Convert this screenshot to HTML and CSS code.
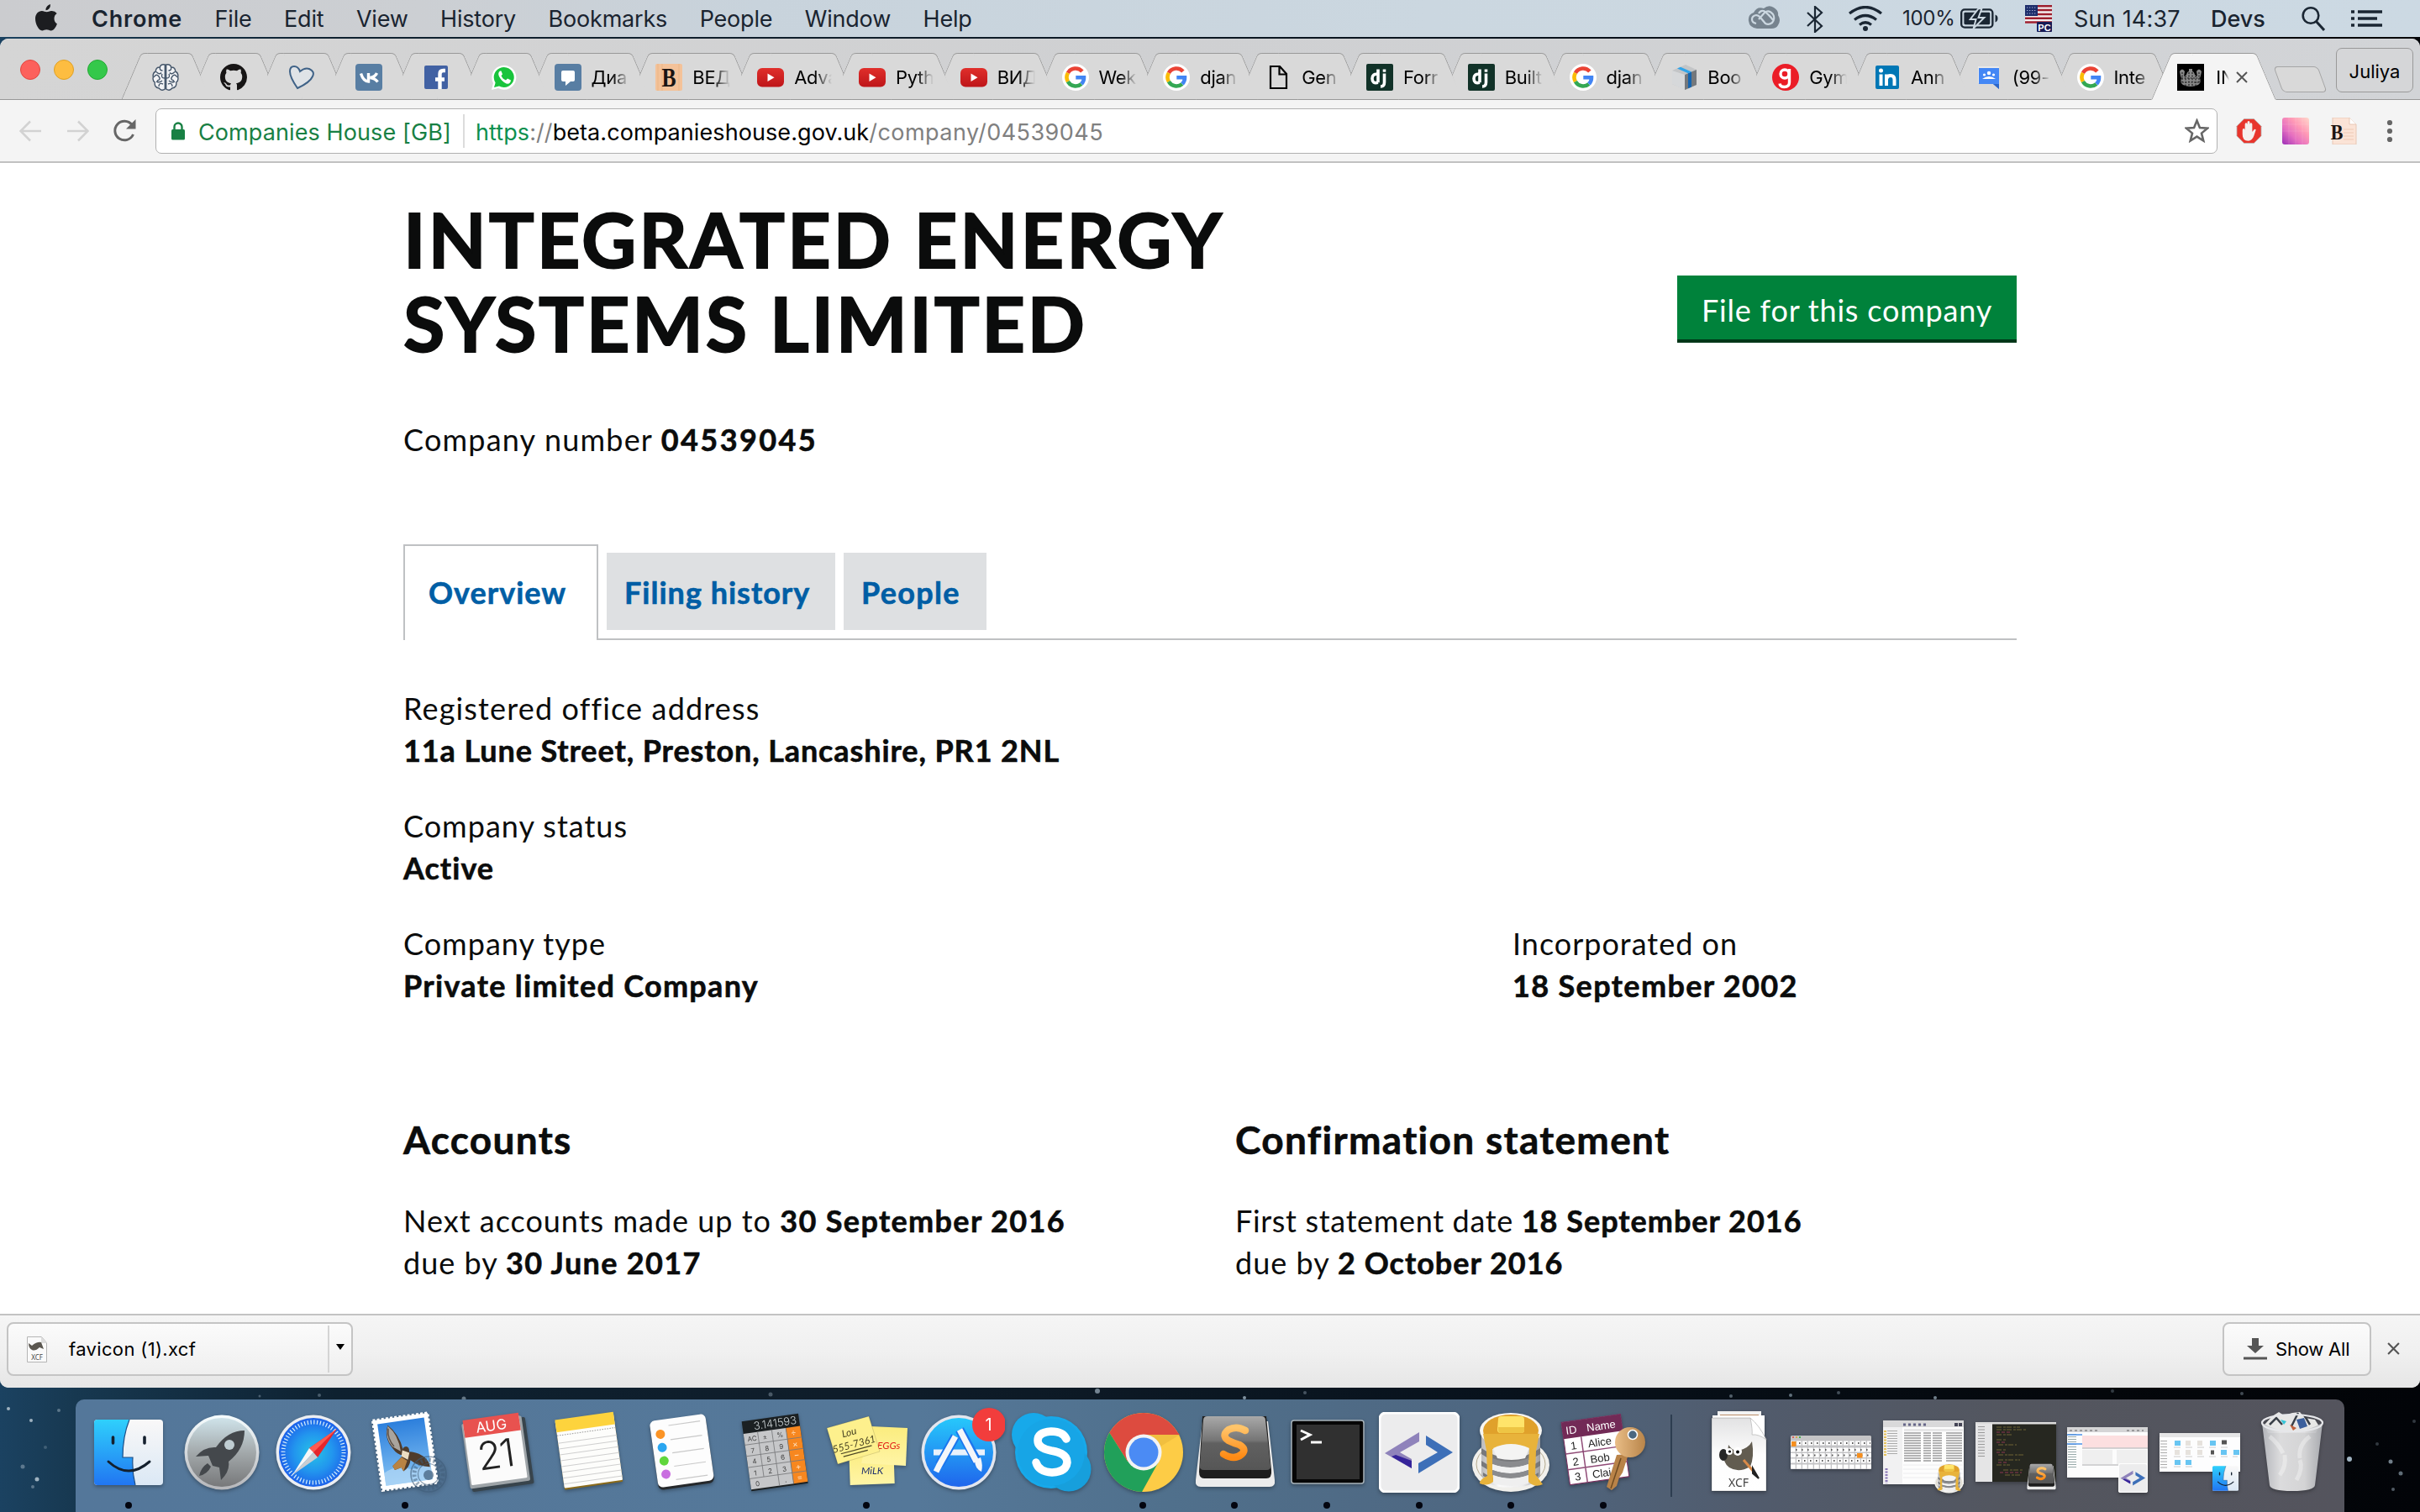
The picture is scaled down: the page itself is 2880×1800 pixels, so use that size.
FILE: index.html
```html
<!DOCTYPE html>
<html lang="en">
<head>
<meta charset="utf-8">
<title>INTEGRATED ENERGY SYSTEMS LIMITED</title>
<link rel="stylesheet" href="styles.css">
</head>
<body>
<svg class="defs" width="0" height="0">
  <defs>
    <linearGradient id="gFinder" x1="0" y1="0" x2="0" y2="1"><stop offset="0" stop-color="#2fd0fc"/><stop offset="1" stop-color="#2176f2"/></linearGradient>
    <linearGradient id="gFace" x1="0" y1="0" x2="0" y2="1"><stop offset="0" stop-color="#f9f8f8"/><stop offset="1" stop-color="#dbe8f5"/></linearGradient>
    <linearGradient id="gRocket" x1="0" y1="0" x2="0" y2="1"><stop offset="0" stop-color="#cfe3ea"/><stop offset=".5" stop-color="#a3a9ab"/><stop offset="1" stop-color="#77787a"/></linearGradient>
    <linearGradient id="gRing" x1="0" y1="0" x2="0" y2="1"><stop offset="0" stop-color="#f6fdff"/><stop offset="1" stop-color="#b5b6ba"/></linearGradient>
    <radialGradient id="gSafari"><stop offset="0" stop-color="#26c3e6"/><stop offset=".55" stop-color="#2296ee"/><stop offset="1" stop-color="#1d62ea"/></radialGradient>
    <linearGradient id="gSky" x1="0" y1="0" x2="0" y2="1"><stop offset="0" stop-color="#2c7fdc"/><stop offset="1" stop-color="#86c4f5"/></linearGradient>
    <linearGradient id="gStore" x1="0" y1="0" x2="0" y2="1"><stop offset="0" stop-color="#27c8fb"/><stop offset="1" stop-color="#1f65ec"/></linearGradient>
    <linearGradient id="gSub" x1="0" y1="0" x2="0" y2="1"><stop offset="0" stop-color="#a9a9a9"/><stop offset=".45" stop-color="#757575"/><stop offset=".5" stop-color="#606060"/><stop offset="1" stop-color="#565656"/></linearGradient>
    <linearGradient id="gOrange" x1="0" y1="0" x2="0" y2="1"><stop offset="0" stop-color="#ffc46a"/><stop offset="1" stop-color="#ff8a14"/></linearGradient>
    <linearGradient id="gCan" x1="0" y1="0" x2="1" y2="0"><stop offset="0" stop-color="#b9b9bb"/><stop offset=".3" stop-color="#fafafa"/><stop offset=".7" stop-color="#ededed"/><stop offset="1" stop-color="#9d9da0"/></linearGradient>
    <linearGradient id="gTrash" x1="0" y1="0" x2="1" y2="0"><stop offset="0" stop-color="#b9bbc0"/><stop offset=".3" stop-color="#e4e4e5"/><stop offset=".7" stop-color="#dcdcdd"/><stop offset="1" stop-color="#aeb0b5"/></linearGradient>
    <linearGradient id="gPaper" x1="0" y1="0" x2="0" y2="1"><stop offset="0" stop-color="#e2e2e3"/><stop offset=".5" stop-color="#fdfdfd"/><stop offset="1" stop-color="#ffffff"/></linearGradient>
    <linearGradient id="gSticky" x1="0" y1="0" x2="0" y2="1"><stop offset="0" stop-color="#fbec7e"/><stop offset="1" stop-color="#fff5a6"/></linearGradient>
    <linearGradient id="gKey" x1="0" y1="0" x2="1" y2="0"><stop offset="0" stop-color="#e9bd86"/><stop offset="1" stop-color="#b9854a"/></linearGradient>
    <linearGradient id="gPink" x1="0" y1="1" x2="1" y2="0"><stop offset="0" stop-color="#9c2fb8"/><stop offset=".35" stop-color="#e56fc0"/><stop offset=".65" stop-color="#ff9ab6"/><stop offset="1" stop-color="#ffd9cc"/></linearGradient>
    <linearGradient id="gYt" x1="0" y1="0" x2="0" y2="1"><stop offset="0" stop-color="#e02f2b"/><stop offset="1" stop-color="#be1519"/></linearGradient>

    <symbol id="google" viewBox="0 0 32 32"><circle cx="16" cy="16" r="16" fill="#fff"/><path d="M23.900 9.100A10.500 10.500 0 0 0 6.900 10.800" fill="none" stroke="#ea4335" stroke-width="4.600"/><path d="M6.900 10.800a10.500 10.500 0 0 0 0 10.400" fill="none" stroke="#fbbc05" stroke-width="4.600"/><path d="M6.900 21.200a10.500 10.500 0 0 0 16 2.700" fill="none" stroke="#34a853" stroke-width="4.600"/><path d="M22.900 23.900A10.500 10.500 0 0 0 26 16.200H16.300" fill="none" stroke="#4285f4" stroke-width="4.600"/></symbol>
    <symbol id="youtube" viewBox="0 0 32 32"><rect y="5" width="32" height="22.500" rx="6" fill="url(#gYt)"/><path d="M12.500 11.500v9.400l8-4.700z" fill="#fff"/></symbol>
    <symbol id="django" viewBox="0 0 32 32"><rect width="32" height="32" rx="2" fill="#113228"/><path d="M14 6.500v15.800M14 12.500q-7-1.200-7 5.100t7 4.700" fill="none" stroke="#fff" stroke-width="3.600"/><path d="M21.500 11.500v10.500q0 5-4.500 5" fill="none" stroke="#fff" stroke-width="3.600"/><rect x="19.700" y="6.500" width="3.600" height="3.200" fill="#fff"/></symbol>
    <symbol id="finder" viewBox="0 0 82 78"><rect width="82" height="78" rx="4" fill="url(#gFace)"/><path d="M4 0H42Q34 20 34 45H46Q45 62 49 78H4Q0 78 0 74V4Q0 0 4 0Z" fill="url(#gFinder)"/><path d="M42 0Q34 20 34 45H46Q45 62 49 78" fill="none" stroke="#1d4f86" stroke-width="1.200"/><path d="M22.500 21v7M60 21v7" stroke="#14202e" stroke-width="3.600" stroke-linecap="round"/><path d="M17 50q24 22 49 0" fill="none" stroke="#14202e" stroke-width="3" stroke-linecap="round"/></symbol>
    <symbol id="sublime" viewBox="0 0 96 84"><path d="M9 6h78l8 70q1 8-6 8H7q-7 0-6-8z" fill="#ececec"/><path d="M9 0h76l6 64q1 10-6 10H11q-6 0-6-8z" fill="#1e1e1e"/><path d="M15 0h64q5 0 5 5l6 53q1 6-5 6H11q-6 0-5-6L10 5q0-5 5-5z" fill="url(#gSub)"/><path d="M60 17q-10-6-20-1-9 7 0 13 6 3 13 5 9 5 3 11-9 8-22 0" fill="none" stroke="url(#gOrange)" stroke-width="8.500" stroke-linecap="round"/></symbol>
    <symbol id="brackets" viewBox="0 0 96 96"><rect x="1" y="1" width="94" height="94" rx="7" fill="#ececed" stroke="#fff" stroke-width="3"/><path d="M48 24L7 49l32 18V56L25 48l23-13z" fill="#8f83bb"/><path d="M15 53l5-2 19 7v9z" fill="#35239a"/><path d="M56 28l32 20-41 25V61l23-13-14-9z" fill="#3d6fb8"/></symbol>
    <symbol id="pancakes" viewBox="0 0 94 96"><ellipse cx="47" cy="63" rx="46" ry="32" fill="#f1f0ec"/><ellipse cx="47" cy="62" rx="41" ry="27" fill="none" stroke="#b4a98e" stroke-width="1"/><path d="M12 24v52q8 14 35 14t35-14V24z" fill="url(#gCan)"/><path d="M12 43q35 24 70 0v7q-35 24-70 0zM12 58q35 24 70 0v6q-35 24-70 0zM14 72q33 22 66 0v4q-33 20-66 0z" fill="#77787b"/><ellipse cx="47" cy="22" rx="37" ry="21" fill="#f7f6f2"/><ellipse cx="47" cy="22" rx="33" ry="19" fill="#e0a12b"/><path d="M14 26q2 10 4 20l1 30q-9 4-9 9 9 4 16-2l-1-39h44l-2 38q8 9 18 4l-9-12 1-28 4-20z" fill="#e8b33b"/><path d="M26 43q21-10 43 0l-5 12q-16 4-33 0z" fill="#f4f4f3"/><path d="M25 55q22 8 43 0v7q-22 8-43 0z" fill="#8a8b8e"/><path d="M25 62q22 8 43 0v7q-22 8-43 0z" fill="#f1f1f1"/><path d="M25 69q22 8 43 0v6q-22 8-43 0z" fill="#8a8b8e"/><path d="M26 75q22 8 42 0v10q-20 6-42 0z" fill="#efefef"/><path d="M32 8q0-3 4-3h23q4 0 4 4v13q0 3-4 3H35q-4 0-4-4z" fill="#ffe46a"/><path d="M32 18h31v4q0 3-4 3H35q-3 0-3-4z" fill="#eec544"/></symbol>
  </defs>
</svg>

<header class="menubar">
  <svg class="apple" viewBox="0 0 26 32"><path d="M18 0q.3 3-1.500 5.200T12.500 7.300Q12.200 4.500 14 2.500 15.500.6 18 0zM22.500 17q0-4 3.200-6Q23.500 8 19.700 7.900c-2.500-.2-4.400 1.300-6 1.300S9.900 7.900 7.900 7.900C3.500 8 0 11.500 0 17.300 0 24 4.300 31.500 8.100 31.500c1.900 0 3-1.200 5.300-1.200s3.300 1.200 5.300 1.200c3.300 0 6-4.500 7.200-8.300Q22.500 21.500 22.500 17z"/></svg>
  <nav class="menus"><b>Chrome</b><span>File</span><span>Edit</span><span>View</span><span>History</span><span>Bookmarks</span><span>People</span><span>Window</span><span>Help</span></nav>
  <div class="status">
    <svg class="st-cc" viewBox="0 0 38 28"><path d="M19 3Q25-2 31 2t5 9q4 6 0 12-2 4-8 4H11Q2 26 1 18T7 8Q11 0 19 3z" fill="#76838e"/><path d="M10 21q-5-1-5-5t5-5q3 0 6 4l5 6q4 2 8-1 4-5 1-10-5-6-10-2l-7 8M13 9q2-4 6-3 5 3 12 12" fill="none" stroke="#ccd8e1" stroke-width="2.200"/></svg>
    <svg class="st-bt" viewBox="0 0 20 32"><path d="M1 8l17 16-8 7V1l8 7L1 24" fill="none" stroke="#1a2633" stroke-width="2.200"/></svg>
    <svg class="st-wifi" viewBox="0 0 42 30"><path d="M2 9Q21-6 40 9M8 16.500q13-10 26 0M14 22.500q7-5.500 14 0" fill="none" stroke="#1a2633" stroke-width="3.200"/><circle cx="21" cy="27" r="3" fill="#1a2633"/></svg>
    <span class="st-pct">100%</span>
    <svg class="st-bat" viewBox="0 0 46 24"><rect x="1.200" y="1.200" width="38" height="21.600" rx="4" fill="none" stroke="#1a2633" stroke-width="2.400"/><rect x="4.500" y="4.500" width="31.500" height="15" rx="1.500" fill="#1a2633"/><path d="M42.500 7.500q3 1 3 4.500t-3 4.500z" fill="#1a2633"/><path d="M22 0L12 13h7l-3 11L29 11h-7l4-11z" fill="#1a2633" stroke="#ccd8e1" stroke-width="2"/></svg>
    <svg class="st-flag" viewBox="0 0 32 32"><rect width="32" height="22" fill="#f3eff0"/><path d="M0 1.200h32M0 6h32M0 11h32M0 15.800h32M0 20.600h32" stroke="#9d1f2e" stroke-width="2.500"/><rect width="15" height="13" fill="#1d2d6b"/><path d="M2 3h12M2 6.500h12M2 10h12" stroke="#aab2d6" stroke-width="1.200" stroke-dasharray="1.300 1.700"/><rect x="14" y="20" width="18" height="12" rx="1" fill="#171a54"/><text x="23" y="30.500" text-anchor="middle" class="flag-text">PC</text></svg>
    <span class="st-time">Sun 14:37</span>
    <span class="st-user">Devs</span>
    <svg class="st-search" viewBox="0 0 28 30"><circle cx="11" cy="11.500" r="9.300" fill="none" stroke="#1a2633" stroke-width="2.600"/><path d="M17.500 18.500L27 29" stroke="#1a2633" stroke-width="3"/></svg>
    <svg class="st-list" viewBox="0 0 37 20"><path d="M0 2h4M0 10h4M0 18h4" stroke="#1a2633" stroke-width="3.600"/><path d="M8 2h29M8 10h23M8 18h29" stroke="#1a2633" stroke-width="3.600"/></svg>
  </div>
</header>

<main class="window">
  <div class="tabstrip">
    <div class="lights"><i class="red"></i><i class="yellow"></i><i class="green"></i></div>
    <div class="tabs">
      <div class="tab pin"><svg viewBox="0 0 32 32"><path d="M15.300 1q-5-1-6 3-5 0-5 5-4 2-3 7-1 4 2 6-1 6 5 7 3 4 7 1zM16.700 1q5-1 6 3 5 0 5 5 4 2 3 7 1 4-2 6 1 6-5 7-3 4-7 1z" fill="#f2f3f5" stroke="#46576b" stroke-width="1.400"/><path d="M9.500 4q-1 4 3 4M5 9.500q4 4 6 1M2 16q3-5 6-1t-2 5M12 12q-2 5 3 5M5 21q4 2 7-1M8 27q0-5 5-3M22.500 4q1 4-3 4M27 9.500q-4 4-6 1M30 16q-3-5-6-1t2 5M20 12q2 5-3 5M27 21q-4 2-7-1M24 27q0-5-5-3" fill="none" stroke="#46576b" stroke-width="1.400"/></svg></div>
      <div class="tab pin"><svg viewBox="0 0 16 16"><path fill="#171515" d="M8 0C3.580 0 0 3.580 0 8c0 3.540 2.290 6.530 5.470 7.590.4.070.55-.17.550-.38 0-.19-.01-.82-.01-1.490-2.010.37-2.530-.49-2.690-.94-.09-.23-.48-.94-.82-1.130-.28-.15-.68-.52-.01-.53.63-.01 1.080.58 1.230.82.72 1.210 1.870.87 2.330.66.07-.52.28-.87.510-1.070-1.780-.2-3.640-.89-3.640-3.950 0-.87.310-1.590.820-2.150-.08-.2-.36-1.020.08-2.120 0 0 .67-.21 2.200.82.640-.18 1.320-.27 2-.27s1.360.09 2 .27c1.530-1.040 2.200-.82 2.200-.82.440 1.100.160 1.920.080 2.120.510.560.820 1.270.820 2.150 0 3.070-1.870 3.750-3.650 3.950.290.250.540.730.540 1.480 0 1.070-.01 1.930-.01 2.200 0 .21.150.460.550.380A8.010 8.010 0 0 0 16 8c0-4.420-3.580-8-8-8z"/></svg></div>
      <div class="tab pin"><svg viewBox="0 0 32 32"><path d="M12 29Q3 16 3 9q0-6 5-6 5 0 7 6 6-5 11-3 7 3 4 9-3 7-18 14z" fill="#dfe3e7" stroke="#3f6287" stroke-width="2"/></svg></div>
      <div class="tab pin"><svg viewBox="0 0 32 32"><rect width="32" height="32" rx="4" fill="#587ea3"/><path d="M6.500 11.500q3 9.500 9 9.500V11M25.500 11q-2 4.500-8 5.500 5.500.5 9 5" fill="none" stroke="#fff" stroke-width="3.400"/></svg></div>
      <div class="tab pin"><svg viewBox="0 0 32 32"><rect x="2" y="2" width="28" height="28" rx="2" fill="#4161a3"/><path d="M20.500 30V15.500M27 8h-2.500q-4 0-4 4v4M15 18.500h11" fill="none" stroke="#fff" stroke-width="4.400"/></svg></div>
      <div class="tab pin"><svg viewBox="0 0 32 32"><path d="M1 31l2-8A14.500 14.500 0 1 1 9 29z" fill="#fff"/><path d="M4 28l1.600-5.600A12 12 0 1 1 10 26.500z" fill="#19c43c"/><path d="M11 8.500q-3 2.500-1 6.500 3 6 8.500 8.500 5 1 5.500-4l-4-2-2 2q-4-1.500-5.500-5.500l1.500-1.500-1.500-4z" fill="#fff"/></svg></div>
      <div class="tab"><svg viewBox="0 0 32 32"><rect width="32" height="32" rx="4" fill="#587ea3"/><path d="M10 8h12q2 0 2 2v9q0 2-2 2h-3l-6 5v-5h-3q-2 0-2-2v-9q0-2 2-2z" fill="#fff"/></svg><span>Диа</span></div>
      <div class="tab"><svg viewBox="0 0 32 32"><rect width="32" height="32" rx="2" fill="#f4c299"/><path d="M3 0v32M8 0v32M28 0v32" stroke="#eab585"/><text x="20" y="27" text-anchor="middle" class="b-text">B</text></svg><span>ВЕД</span></div>
      <div class="tab"><svg><use href="#youtube"/></svg><span>Adva</span></div>
      <div class="tab"><svg><use href="#youtube"/></svg><span>Pyth</span></div>
      <div class="tab"><svg><use href="#youtube"/></svg><span>ВИД</span></div>
      <div class="tab"><svg><use href="#google"/></svg><span>Wek</span></div>
      <div class="tab"><svg><use href="#google"/></svg><span>djan</span></div>
      <div class="tab"><svg viewBox="0 0 32 32"><path d="M7 3h11l8 9v17H7zM17.500 3v9.500H26" fill="none" stroke="#000" stroke-width="2.200"/></svg><span>Gen</span></div>
      <div class="tab"><svg><use href="#django"/></svg><span>Forr</span></div>
      <div class="tab"><svg><use href="#django"/></svg><span>Built</span></div>
      <div class="tab"><svg><use href="#google"/></svg><span>djan</span></div>
      <div class="tab"><svg viewBox="0 0 32 32"><path d="M2 8l16-7 13 6v18L18 31 2 24z" fill="#c3c5c7"/><path d="M2 8l15 5v18L2 24z" fill="#d6d8da"/><path d="M17 13l14-6v18l-14 6z" fill="#74787c"/><path d="M21 11.300l4-1.700v18l-4 1.700z" fill="#1565b0"/><path d="M8 5.500l4-1.800 13 5.900-4 1.700z" fill="#2fa4ea"/></svg><span>Boo</span></div>
      <div class="tab"><svg viewBox="0 0 32 32"><circle cx="16" cy="16" r="16" fill="#eb1d27"/><circle cx="15" cy="12" r="5" fill="none" stroke="#fff" stroke-width="3.400"/><path d="M20.500 6v16q0 5.500-6 5.500-5 0-5.500-4" fill="none" stroke="#fff" stroke-width="3.400"/></svg><span>Gym</span></div>
      <div class="tab"><svg viewBox="0 0 32 32"><rect x="2" y="2" width="28" height="28" rx="2" fill="#0077b5"/><path d="M8.500 12.500V26M15 12.500V26M15 18q1-4 5-4 4.500 0 4.500 5v7" fill="none" stroke="#fff" stroke-width="4"/><circle cx="8.500" cy="8" r="2.500" fill="#fff"/></svg><span>Ann</span></div>
      <div class="tab"><svg viewBox="0 0 32 32"><rect x="3" y="3" width="25" height="20" fill="#e9e9e9"/><path d="M4 5h24v25l-7-6H4z" fill="#4387f5"/><path d="M21 24h7v6z" fill="#2c66c8"/><circle cx="16" cy="11" r="2.200" fill="#fff"/><circle cx="10.500" cy="13" r="1.600" fill="#fff"/><circle cx="21.500" cy="13" r="1.600" fill="#fff"/><path d="M8 18q8-6 16 0z" fill="#fff"/></svg><span>(99-</span></div>
      <div class="tab"><svg><use href="#google"/></svg><span>Inte</span></div>
      <div class="tab active"><svg viewBox="0 0 32 32"><rect width="32" height="32" fill="#000"/><path d="M3 9q3-5 6 0l-1 6 3-2q1-4 3-4V6h4v3q2 0 3 4l3 2-1-6q3-5 6 0-1 6-2 8 2 5-2 8-9 4-18 0-4-3-2-8-1-2-2-8z" fill="#888"/><path d="M6 10v14M10 14v12M14 10v16M18 10v16M22 14v12M26 10v14M5 17h22M6 22h20" stroke="#222" stroke-width="1.200" stroke-dasharray="2 1.500"/></svg><span>IN</span><em><svg viewBox="0 0 14 14"><path d="M1 1l12 12M13 1L1 13" stroke="#555" stroke-width="2"/></svg></em></div>
    </div>
    <div class="newtab"></div>
    <div class="profile">Juliya</div>
  </div>

  <div class="toolbar">
    <svg class="arrow" viewBox="0 0 26 26"><path d="M26 13H2M13 1.500L1.500 13 13 24.500" fill="none" stroke="#d2d2d2" stroke-width="2.600"/></svg>
    <svg class="arrow fwd" viewBox="0 0 26 26"><path d="M0 13h24M13 1.500L24.500 13 13 24.500" fill="none" stroke="#d2d2d2" stroke-width="2.600"/></svg>
    <svg class="reload" viewBox="0 0 28 28"><path d="M23 6.500A11.300 11.300 0 1 0 24.500 18" fill="none" stroke="#666" stroke-width="3"/><path d="M27.500 0v11.500H16z" fill="#666"/></svg>
    <div class="urlbox">
      <svg class="lock" viewBox="0 0 16 22"><rect y="9" width="16" height="12.500" rx="1.500" fill="#188044"/><path d="M3.500 10V6a4.500 4.500 0 0 1 9 0v4" fill="none" stroke="#188044" stroke-width="2.400"/></svg>
      <span class="org">Companies House [GB]</span>
      <i class="bar"></i>
      <span class="url"><span class="sec">https</span><span class="dim">://</span>beta.companieshouse.gov.uk<span class="dim path">/company/04539045</span></span>
      <svg class="star" viewBox="0 0 28 28"><path d="M14 2.500l3.300 8.200 8.800.6-6.800 5.700 2.200 8.600-7.500-4.700-7.500 4.700 2.200-8.600-6.800-5.700 8.800-.6z" fill="none" stroke="#666" stroke-width="2.500"/></svg>
    </div>
    <svg class="ext abp" viewBox="0 0 32 32"><path d="M10 1h12l9 9v12l-9 9H10l-9-9V10z" fill="#e8352c" stroke="#b8c0c0" stroke-width=".8"/><path d="M8 15q0-2 1.500-2t1.500 2V8q0-2 1.400-2T14 8V5.500q0-2 1.500-2t1.500 2V8q0-2 1.500-2T20 8v9l2-2.500q1.500-1.500 2.500 0L22 22q-2 6-7 6-7 0-7-8z" fill="#f5efed"/></svg>
    <svg class="ext pinkext" viewBox="0 0 32 32"><rect width="32" height="32" rx="3" fill="url(#gPink)"/><path d="M8 0v32M16 0v32M24 0v32M0 8h32M0 16h32" stroke="#fff" stroke-opacity=".12"/></svg>
    <svg class="ext" viewBox="0 0 32 32"><path d="M3 0h20l8 8v24H3z" fill="#fbe3d6" stroke="#e7c7b5"/><path d="M23 0v8h8" fill="#fff" stroke="#e7c7b5"/><path d="M16 14h12M16 18h12M16 22h12M16 26h12" stroke="#eec9b4"/><text x="9.500" y="26" text-anchor="middle" class="b-ext">B</text></svg>
    <svg class="dots" viewBox="0 0 8 28"><circle cx="4" cy="4" r="3.100"/><circle cx="4" cy="14" r="3.100"/><circle cx="4" cy="24" r="3.100"/></svg>
  </div>

  <section class="page">
    <div class="head">
      <h1><span class="t1">INTEGRATED ENERGY</span><br><span class="t2">SYSTEMS LIMITED</span></h1>
      <a class="file-btn">File for this company</a>
    </div>
    <p class="number">Company number <b class="digits">04539045</b></p>
    <nav class="ctabs"><a class="current">Overview</a><a class="filing">Filing history</a><a class="people">People</a></nav>
    <dl class="facts">
      <div><dt class="reg">Registered office address</dt><dd class="addr">11a Lune Street, Preston, Lancashire, PR1 2NL</dd></div>
      <div><dt>Company status</dt><dd>Active</dd></div>
      <div class="pair">
        <div><dt>Company type</dt><dd class="ptype">Private limited Company</dd></div>
        <div><dt>Incorporated on</dt><dd class="date">18 September 2002</dd></div>
      </div>
    </dl>
    <div class="cols">
      <div><h2>Accounts</h2><p>Next accounts made up to <b class="date">30 September 2016</b><br>due by <b class="date">30 June 2017</b></p></div>
      <div><h2>Confirmation statement</h2><p><span class="first">First statement date </span><b>18 September 2016</b><br>due by <b>2 October 2016</b></p></div>
    </div>
  </section>

  <footer class="downloads">
    <div class="dl-item">
      <svg class="dl-icon" viewBox="0 0 24 31"><path d="M.5.500h17l6 7v23H.5z" fill="#fafafa" stroke="#b5b5b5"/><path d="M17 0v8h7" fill="#ddd"/><path d="M2 8l4 3q6-5 11-4l3 8-5-2q-5 5-9 3-4-2-4-8z" fill="#5b5750"/><text x="12" y="28" text-anchor="middle" class="xcf-small">XCF</text></svg>
      <span class="dl-name">favicon (1).xcf</span>
      <span class="dl-caret"><svg viewBox="0 0 10 7"><path d="M0 0h10L5 7z"/></svg></span>
    </div>
    <div class="dl-all"><svg viewBox="0 0 28 26"><path d="M10 0h8v9h6L14 18 4 9h6z" fill="#555"/><path d="M0 24h28" stroke="#555" stroke-width="3"/></svg><span>Show All</span></div>
    <svg class="dl-x" viewBox="0 0 14 14"><path d="M1 1l12 12M13 1L1 13" stroke="#555" stroke-width="2"/></svg>
  </footer>
</main>

<svg class="stars" viewBox="0 0 2880 148"><g fill="#9fb2c0"><circle cx="10" cy="25" r="2"/><circle cx="37" cy="39" r="2"/><circle cx="70" cy="27" r="2" opacity=".5"/><circle cx="44" cy="109" r="2.500"/><circle cx="27" cy="94" r="2.500" opacity=".5"/><circle cx="39" cy="118" r="2" opacity=".5"/><circle cx="54" cy="71" r="2" opacity=".3"/><circle cx="309" cy="10" r="1.500" opacity=".4"/><circle cx="380" cy="9" r="2" opacity=".4"/><circle cx="552" cy="13" r="2.500" opacity=".6"/><circle cx="917" cy="8" r="2.500" opacity=".4"/><circle cx="1306" cy="4" r="3" opacity=".7"/><circle cx="1481" cy="12" r="2" opacity=".8"/><circle cx="1553" cy="6" r="2" opacity=".4"/><circle cx="2060" cy="10" r="2" opacity=".5"/><circle cx="2131" cy="9" r="2" opacity=".6"/><circle cx="2188" cy="6" r="2" opacity=".4"/><circle cx="2303" cy="12" r="2" opacity=".7"/><circle cx="2514" cy="4" r="2" opacity=".3"/><circle cx="2668" cy="7" r="2" opacity=".4"/><circle cx="2796" cy="85" r="3"/><circle cx="2845" cy="88" r="2.500" opacity=".7"/><circle cx="2857" cy="102" r="2.500" opacity=".6"/><circle cx="2848" cy="121" r="2" opacity=".5"/><circle cx="2829" cy="67" r="2" opacity=".3"/><circle cx="2873" cy="40" r="2" opacity=".3"/></g></svg>

<aside class="dock">
  <div class="slot run"><svg viewBox="0 0 110 134"><use href="#finder" x="13" y="24" width="82" height="78"/></svg></div>
  <div class="slot"><svg viewBox="0 0 110 134"><circle cx="55" cy="63" r="44.500" fill="url(#gRing)"/><circle cx="55" cy="63" r="41" fill="url(#gRocket)"/><path d="M82 37Q62 37 48 57 34 56 24 68l15-1 5 12 8 2 2 15q11-11 9-22Q82 59 82 37zM38 76q-8 5-10 15 10-2 14-11z" fill="#44484c"/><circle cx="64" cy="54" r="6" fill="#bfcdd2"/></svg></div>
  <div class="slot"><svg viewBox="0 0 110 134"><circle cx="55" cy="63" r="44.500" fill="#eceef2"/><circle cx="55" cy="63" r="41" fill="url(#gSafari)"/><circle cx="55" cy="63" r="36" fill="none" stroke="#d9f0fc" stroke-width="5" stroke-dasharray="1.200 2.570"/><path d="M83 35L60 69 50 58z" fill="#e6262b"/><path d="M83 35L55 63l-5-5z" fill="#ff5a50"/><path d="M30 90l20-32 5 5z" fill="#f7f7f7"/><path d="M30 90l25-27 5 6z" fill="#c9cdd2"/></svg></div>
  <div class="slot run"><svg viewBox="0 0 110 134"><g transform="rotate(-8 55 62)"><rect x="21" y="20" width="66" height="84" fill="#fff" stroke="#fff" stroke-width="3" stroke-dasharray="3 2.200"/><rect x="26" y="25" width="56" height="74" fill="url(#gSky)"/><path d="M26 84q14-8 28-2t28-6v23H26z" fill="#b5d9f5" opacity=".7"/><path d="M38 28q-7 14 2 28 4 8 11 10-6 5-14 11l2 5 8-2 2 5q8-4 10-12 8 9 22 11 0-10-11-17-7-4-11-4 1-6-3-7-4 0-4 3-2-19-14-31z" fill="#4f3c2c"/><path d="M38 29q-6 13 2 25l9 7q0-20-11-32z" fill="#a9a49d"/><path d="M38 32q-3 12 4 22" fill="none" stroke="#5c5148" stroke-width="1.500"/><path d="M37 77l12-9 6 5-6 12-2-5-8 2z" fill="#b98343"/><path d="M51 60l8 4-3 8-7-5z" fill="#eadcc2"/></g><circle cx="82" cy="89" r="21" fill="none" stroke="#3f5b78" stroke-opacity=".6" stroke-width="1.600"/><circle cx="82" cy="89" r="12.500" fill="none" stroke="#3f5b78" stroke-opacity=".6" stroke-width="1.200"/><circle cx="82" cy="89" r="17" fill="none" stroke="#3f5b78" stroke-opacity=".5" stroke-width="5" stroke-dasharray="2.500 2.500"/><circle cx="82" cy="90" r="6" fill="#3f5b78" opacity=".7"/></svg></div>
  <div class="slot"><svg viewBox="0 0 110 134"><g transform="translate(-4 0) rotate(-8 55 62)"><rect x="22" y="26" width="74" height="80" rx="2" fill="#38444c"/><rect x="20" y="24" width="72" height="78" rx="2" fill="#9ea4a8"/><rect x="22" y="22" width="67" height="76" rx="1.500" fill="#fbfbfb"/><rect x="22" y="20" width="67" height="21" fill="#e8524f"/><text x="55" y="37" text-anchor="middle" class="cal-m">AUG</text><text x="55" y="82" text-anchor="middle" class="cal-d">21</text></g></svg></div>
  <div class="slot"><svg viewBox="0 0 110 134"><g transform="rotate(-8 55 62)"><rect x="19" y="22" width="70" height="81" rx="1.500" fill="#8a6a1a"/><rect x="19" y="20" width="70" height="81" rx="1.500" fill="#fdfdfb"/><rect x="19" y="19" width="70" height="15" fill="#fdd33d"/><path d="M19 38h70" stroke="#999" stroke-dasharray="1.500 1.500"/><path d="M19 47h70M19 54h70M19 61h70M19 68h70M19 75h70M19 82h70M19 89h70M19 96h70" stroke="#cfcfcf"/></g></svg></div>
  <div class="slot"><svg viewBox="0 0 110 134"><g transform="rotate(-8 55 62)"><rect x="21" y="23" width="67" height="81" rx="6" fill="#25282b"/><rect x="21" y="21" width="67" height="80" rx="6" fill="#fdfdfd"/><circle cx="32" cy="38" r="5.500" fill="#fb9426"/><circle cx="32" cy="54" r="5.500" fill="#2aa6f0"/><circle cx="32" cy="70" r="5.500" fill="#60d63c"/><circle cx="32" cy="86" r="5.500" fill="#c96fe0"/><path d="M43 29h38M43 46h38M43 62h38M43 78h38M43 94h38" stroke="#c9c9c9" stroke-width="1.200"/></g></svg></div>
  <div class="slot"><svg viewBox="0 0 110 134"><g transform="rotate(-8 55 62)"><rect x="21" y="21" width="68" height="84" fill="#1b2022"/><rect x="21" y="36" width="51" height="67" fill="#c6c7c9"/><rect x="72" y="36" width="17" height="67" fill="#f7871f"/><path d="M21 49.500h68M21 63h68M21 76.500h68M21 90h68M38 36v54M55 36v67M72 36v67" stroke="#77797b" stroke-width=".8"/><text x="86" y="33" text-anchor="end" class="calc-n">3.141593</text><g class="calc-k"><text x="25" y="46">AC</text><text x="43" y="46">±</text><text x="60" y="46">%</text><text x="27" y="60">7</text><text x="44" y="60">8</text><text x="61" y="60">9</text><text x="27" y="73">4</text><text x="44" y="73">5</text><text x="61" y="73">6</text><text x="27" y="87">1</text><text x="44" y="87">2</text><text x="61" y="87">3</text><text x="27" y="100">0</text><text x="62" y="100">.</text></g><g class="calc-o"><text x="77" y="46">÷</text><text x="77" y="60">×</text><text x="77" y="73">−</text><text x="77" y="87">+</text><text x="77" y="100">=</text></g></g></svg></div>
  <div class="slot run"><svg viewBox="0 0 110 134"><rect x="34" y="58" width="53" height="43" transform="rotate(-2 60 80)" fill="url(#gSticky)"/><text x="48" y="89" class="note blue">MiLK</text><path d="M59 32l44 2-2 45-53-3z" fill="url(#gSticky)"/><text x="67" y="59" class="note red">EGGs</text><path d="M7 34l50-14 13 42-50 15z" fill="#fdf08d" stroke="#00000022"/><g transform="rotate(-15 40 48)"><text x="36" y="42" text-anchor="middle" class="note ink">Lou</text><text x="38" y="57" text-anchor="middle" class="note ink">555-7361</text><path d="M20 60h38M22 64h30" stroke="#4a4524" stroke-width="1.200"/></g></svg></div>
  <div class="slot"><svg viewBox="0 0 110 134"><circle cx="55" cy="63" r="44.500" fill="#e3e6ee"/><circle cx="55" cy="63" r="41" fill="url(#gStore)"/><path d="M25 63h61" stroke="#e9f1fb" stroke-width="7"/><path d="M51 44L32 78" stroke="#1c76ee" stroke-width="11"/><path d="M51 44L32 78l-4 8" stroke="#f4f6fa" stroke-width="7" fill="none"/><path d="M56 36l22 40" stroke="#1c76ee" stroke-width="11"/><path d="M56 36l20 38" stroke="#f4f6fa" stroke-width="7"/><path d="M74 72l7-3q3 9 1 17-8-4-8-14z" fill="#f4f6fa"/><circle cx="91" cy="30" r="20" fill="#f23d3c"/><text x="90.500" y="37" text-anchor="middle" class="badge">1</text></svg></div>
  <div class="slot"><svg viewBox="0 0 110 134"><circle cx="55" cy="63" r="43" fill="#17a9ea"/><circle cx="34" cy="42" r="26" fill="#17a9ea"/><circle cx="76" cy="83" r="26.500" fill="#179fdc"/><circle cx="55" cy="63" r="40" fill="#17a5e6"/><path d="M73 47q-4-9-18-9-16 1-16 11 0 9 16 12 19 3 19 14-1 11-18 12-16-1-19-12" fill="none" stroke="#fff" stroke-width="9.500" stroke-linecap="round"/></svg></div>
  <div class="slot run"><svg viewBox="0 0 110 134"><circle cx="55" cy="63" r="47" fill="#fdcc46"/><path d="M14.300 39.500A47 47 0 0 1 95.700 39.500L98 42H55L36 74z" fill="#dd4b3f"/><path d="M14.300 39.500A47 47 0 0 0 53 110L73 74 55 63 36 74z" fill="#21a05a"/><path d="M55 42h43l-23 14z" fill="#e9b53a" opacity=".6"/><circle cx="55" cy="63" r="21.500" fill="#f3f3f3"/><circle cx="55" cy="63" r="17.500" fill="#4b8bf4"/></svg></div>
  <div class="slot run"><svg viewBox="0 0 110 134"><use href="#sublime" x="7" y="20" width="96" height="84"/></svg></div>
  <div class="slot run"><svg viewBox="0 0 110 134"><rect x="12" y="25" width="86" height="75" rx="3" fill="#060606" stroke="#a9b4ba" stroke-width="1.500"/><rect x="18" y="30" width="75" height="65" fill="#303030"/><path d="M23 37l11 5-11 6" fill="none" stroke="#fff" stroke-width="3"/><path d="M35 51h13" stroke="#fff" stroke-width="3"/></svg></div>
  <div class="slot run"><svg viewBox="0 0 110 134"><use href="#brackets" x="6" y="15" width="96" height="96"/></svg></div>
  <div class="slot run"><svg viewBox="0 0 110 134"><use href="#pancakes" x="7" y="15" width="94" height="96"/></svg></div>
  <div class="slot run"><svg viewBox="0 0 110 134"><g transform="rotate(-8 45 60)"><rect x="9" y="22" width="71" height="75" fill="#fff" stroke="#7b2d5e"/><rect x="9" y="22" width="71" height="20" fill="#722a56"/><path d="M9 60h71M9 79h71M30 42v55" stroke="#8f4a76" stroke-width="1.500"/><g class="tbl"><text x="13" y="37" class="th">ID</text><text x="38" y="37" class="th">Name</text><text x="16" y="56">1</text><text x="37" y="56">Alice</text><text x="16" y="75">2</text><text x="37" y="75">Bob</text><text x="16" y="93">3</text><text x="37" y="93">Clai</text></g></g><path d="M70 66L58 104l6 4 6-5 3-10 4-6 7-22z" fill="#b98348"/><path d="M75 70l-12 36" stroke="#6e4a22" stroke-width="1.500"/><circle cx="86" cy="51" r="18" fill="url(#gKey)"/><circle cx="89" cy="42" r="5.500" fill="#4b6781" stroke="#fff" stroke-width="1.500"/></svg></div>
  <div class="sep"></div>
  <div class="slot"><svg viewBox="0 0 110 134"><rect x="29" y="14" width="52" height="30" fill="#f3f3f3"/><path d="M32 18h46v3H32z" fill="#b98b66"/><path d="M23 19h62v45H23z" fill="#fff"/><path d="M22 22h46q8 10 19 26v61H22z" fill="url(#gPaper)" stroke="#0003"/><path d="M68 22q3 15 2 20 8-1 17 6-8-17-19-26z" fill="#fff" stroke="#bbb" stroke-width=".8"/><path d="M42 54q5 8 12 7 12-3 16-11 3 18-2 30-14 8-25 1-8-6-6-15 5-5 5-12z" fill="#625c50"/><ellipse cx="36" cy="66" rx="5" ry="7" fill="#262626"/><circle cx="43" cy="62" r="4" fill="#fff"/><circle cx="53" cy="62" r="5" fill="#fff"/><circle cx="43.500" cy="62" r="1.600"/><circle cx="53" cy="62.500" r="1.900"/><path d="M60 72l12 14" stroke="#d98a48" stroke-width="3"/><path d="M71 82l7 12-7-6z" fill="#222" stroke="#222" stroke-width="2"/><text x="54" y="104" text-anchor="middle" class="xcf">XCF</text></svg></div>
  <div class="slot"><svg viewBox="0 0 110 134"><rect x="7" y="43" width="96" height="40" rx="1.500" fill="#c4c4c6"/><path d="M7 52h96M7 60h96M7 66.500h96M7 73h96M7 80h96" stroke="#fff" stroke-width="5.200" stroke-dasharray="5.700 1.300"/><path d="M10 52h92M13 60h88M14 66.500h88M16 73h86" stroke="#555" stroke-width="1.800" stroke-dasharray="1.500 5.500"/><rect x="8" y="50" width="5.500" height="6" fill="#f68f1e"/><rect x="86" y="64" width="6.500" height="5.500" fill="#f68f1e"/><circle cx="10" cy="45" r="1" fill="#e0443e"/><circle cx="14" cy="45" r="1" fill="#dea123"/><circle cx="18" cy="45" r="1" fill="#1aab29"/></svg></div>
  <div class="slot"><svg viewBox="0 0 110 134"><rect x="7" y="25" width="96" height="76" fill="#fdfdfd"/><rect x="7" y="25" width="96" height="8" fill="#d9d9da"/><path d="M31 30h30" stroke="#668" stroke-width="3" stroke-dasharray="3 3"/><path d="M92 30h10" stroke="#445" stroke-width="4" stroke-dasharray="4 1"/><rect x="7" y="33" width="23" height="68" fill="#f1f1f2"/><path d="M9.500 37v30" stroke="#e6c35c" stroke-width="3" stroke-dasharray="2 1.500"/><path d="M18 37v30" stroke="#aaa" stroke-width="12" stroke-dasharray="1 2"/><path d="M32 35h70v3H32z" fill="#e7e7e8"/><path d="M32 40h20M55 40h9M66 40h11M82 40h19M32 43h20M55 43h9M66 43h11M82 43h19M32 46h20M55 46h9M66 46h11M82 46h19M32 49h20M55 49h9M66 49h11M82 49h19M32 52h20M55 52h9M66 52h11M82 52h19M32 55h20M55 55h9M66 55h11M82 55h19M32 58h20M55 58h9M66 58h11M82 58h19M32 61h20M55 61h9M66 61h11M82 61h19M32 64h20M55 64h9M66 64h11M82 64h19M32 67h20M55 67h9M66 67h11M82 67h19M32 70h20M55 70h9M66 70h11M82 70h19M32 73h20M55 73h9M66 73h11M82 73h19" stroke="#9a9a9c" stroke-width="1.400"/><path d="M31 78h71M31 83h71M31 88h71M31 93h71" stroke="#ececee"/><path d="M11 82v18" stroke="#8877b5" stroke-width="3" stroke-dasharray="2 1.500"/><use href="#pancakes" x="68" y="76" width="35" height="36"/></svg></div>
  <div class="slot"><svg viewBox="0 0 110 134"><rect x="7" y="27" width="96" height="71" fill="#262720"/><rect x="7" y="27" width="96" height="2.500" fill="#ddd"/><rect x="7" y="29" width="20" height="69" fill="#e5e5e6"/><path d="M14 32v36" stroke="#999" stroke-width="8" stroke-dasharray="1 2.500"/><path d="M32 33h28M32 36h36M32 42h20M32 48h12M34 54h22M32 60h12M34 66h30M34 72h26M32 78h16M40 84h24M42 90h20" stroke="#6f6534" stroke-width="1" stroke-dasharray="6 2 3 1"/><path d="M32 39h16M32 51h12M32 63h12M34 75h10M36 87h26" stroke="#8c3850" stroke-width="1" stroke-dasharray="4 2"/><use href="#sublime" x="68" y="76" width="35" height="32"/></svg></div>
  <div class="slot"><svg viewBox="0 0 110 134"><rect x="7" y="33" width="96" height="60" fill="#fcfcfc"/><rect x="7" y="33" width="96" height="6" fill="#d5d5d6"/><path d="M10 37h36M78 37h20" stroke="#9a9a9c" stroke-width="2" stroke-dasharray="3 3"/><path d="M13 41v40" stroke="#9aa" stroke-width="10" stroke-dasharray="1 2"/><path d="M7 42h18M7 53h18" stroke="#4a90e8" stroke-width="1.500"/><rect x="25" y="43" width="78" height="15" fill="#fcdfe0"/><path d="M25 58h78M25 78h78" stroke="#c5c5c6" stroke-width="1.500"/><path d="M25 60h36v17H25zM66 60h36v17H66z" fill="#efefef"/><use href="#brackets" x="68" y="76" width="35" height="35"/></svg></div>
  <div class="slot"><svg viewBox="0 0 110 134"><rect x="7" y="40" width="96" height="46" fill="#fdfdfe"/><rect x="7" y="40" width="96" height="5" fill="#e5e5e6"/><path d="M12 49v34" stroke="#aaa" stroke-width="8" stroke-dasharray="1 2.500"/><path d="M25 52h7M25 75h7M38 75h7M67 52h7M80 63h7M95 63h7" stroke="#68c5f2" stroke-width="6"/><path d="M38 52h6M52 52h6M38 63h6M52 63h6M25 63h6" stroke="#e6e2dd" stroke-width="6"/><path d="M68 63h4M81 51h6" stroke="#555" stroke-width="5"/><path d="M24 57h64M24 68h76M24 80h24" stroke="#ccc" stroke-width="1" stroke-dasharray="8 6"/><use href="#finder" x="70" y="79" width="31" height="30"/></svg></div>
  <div class="slot"><svg viewBox="0 0 110 134"><path d="M22 30l9-10 8-5 6 4 10-3 9-1 6 7 12 2 5 8-4 8H26z" fill="#e7e7e6"/><path d="M28 30l8-8 7 8M62 16l-8 16M70 20l6 10" stroke="#3a4048" stroke-width="2.500" fill="none"/><path d="M41 24l7 2-3 4z" fill="#35c6d8"/><path d="M60 24l9-2 4 10-9 3z" fill="#3b5f9c"/><path d="M52 30l8 4-4 3z" fill="#c0603a"/><path d="M19 28q36 20 72 0l-9 74q-1 7-27 7t-27-7z" fill="url(#gTrash)" fill-opacity=".95"/><path d="M28 44q10 8 16 20M76 44q-14 10-12 26M40 90q8-10 6-24M60 96q8-14 4-24" stroke="#fff" stroke-opacity=".35" stroke-width="5" fill="none"/><ellipse cx="55" cy="28" rx="36" ry="10" fill="none" stroke="#e6e7ea" stroke-width="2.200"/></svg></div>
</aside>
</body>
</html>
```

FILE: styles.css
```css
* { box-sizing: border-box; }
body {
  margin: 0;
  width: 2880px;
  height: 1800px;
  overflow: hidden;
  display: flex;
  flex-direction: column;
  position: relative;
  font-family: Inter, "Liberation Sans", sans-serif;
  background: linear-gradient(to right, #1b4261 0, #173850 90px, #0e2130 400px, #0f1d2a 1000px, #08121c 1800px, #04070b 2500px, #020408 2880px);
}
p, h1, h2, dl, dd { margin: 0; font-weight: inherit; }
svg { display: block; flex: none; }
.defs { position: absolute; }

/* menu bar */
.menubar {
  height: 44px;
  flex: none;
  display: flex;
  align-items: center;
  background: linear-gradient(to right, #cbcccf 0, #cccfd3 500px, #c8d3dc 900px, #cbd7e0 1700px, #ccd9e3 2880px);
  color: #1a2430;
  font-size: 27px;
  line-height: 44px;
}
.apple { width: 26px; height: 32px; margin: -2px 41px 0 42px; fill: #1c1d20; }
.menus { display: flex; gap: 38.500px; letter-spacing: -0.200px; padding-top: 1px; }
.menus b { font-weight: 600; letter-spacing: 0.800px; }
.status { display: flex; align-items: center; margin-left: auto; }
.st-cc { width: 38px; height: 28px; margin: -3px 32px 0 0; }
.st-bt { width: 20px; height: 32px; margin: 2px 29px 0 0; }
.st-wifi { width: 42px; height: 30px; margin-right: 23px; }
.st-pct { width: 69px; font-size: 24px; letter-spacing: -0.300px; white-space: nowrap; }
.st-bat { width: 45px; height: 24px; margin-right: 32px; }
.st-flag { width: 32px; height: 32px; margin-right: 26px; }
.st-time { width: 163px; letter-spacing: 0.200px; padding-top: 1px; }
.st-user { width: 108px; font-weight: 500; padding-top: 1px; }
.st-search { width: 28px; height: 30px; margin-right: 31px; }
.st-list { width: 37px; height: 20px; margin-right: 45px; }
.flag-text { font: bold 11px "Liberation Sans", sans-serif; fill: #fff; }

/* browser window */
.window {
  margin-top: 2px;
  height: 1606px;
  flex: none;
  display: flex;
  flex-direction: column;
  border-radius: 10px;
  overflow: hidden;
  background: #fff;
}
.tabstrip {
  height: 73px;
  flex: none;
  display: flex;
  align-items: flex-end;
  border-bottom: 1px solid #989898;
  background: linear-gradient(to right, #d5d5d5, #cfd0d2 1400px, #d2d4d7);
  position: relative;
  z-index: 1;
}
.lights { display: flex; gap: 16px; width: 144px; padding-left: 24px; height: 47px; }
.lights i { width: 24px; height: 24px; border-radius: 50%; border: 1px solid #e2463f; background: #fc615c; }
.lights .yellow { background: #fdbd41; border-color: #dfa023; }
.lights .green { background: #34c84a; border-color: #24a934; }
.tabs { display: flex; height: 56px; position: relative; isolation: isolate; margin-bottom: -1px; }
.tab {
  position: relative;
  z-index: 1;
  width: 148.800px;
  height: 56px;
  margin-right: -28px;
  padding: 2px 0 0 32px;
  display: flex;
  align-items: center;
  font-size: 22px;
  color: #000;
  isolation: isolate;
}
.tab.pin { width: 108.600px; padding-left: 37px; }
.tab::before, .tab::after {
  content: "";
  position: absolute;
  z-index: -1;
  top: 0;
  bottom: 0;
  background: #d9d9d9;
  border: 0 solid #999;
  border-top-width: 1.500px;
  border-bottom-width: 1px;
}
.tab::before { left: 12px; right: 40%; border-left-width: 1.500px; transform: skewX(-23deg); border-top-left-radius: 5px; }
.tab::after { right: 12px; left: 40%; border-right-width: 1.500px; transform: skewX(23deg); border-top-right-radius: 5px; }
.tab + .tab::before { clip-path: polygon(0 0, 100% 0, 100% 100%, 24px 100%, 0 46%); }
.tab > svg { width: 32px; height: 32px; }
.tab span {
  width: 45px;
  margin-left: 12px;
  overflow: hidden;
  white-space: nowrap;
  letter-spacing: -0.300px;
  -webkit-mask-image: linear-gradient(to right, #000 55%, transparent);
  mask-image: linear-gradient(to right, #000 55%, transparent);
}
.tab.active { z-index: 3; padding-left: 31px; margin-right: 0; }
.tab.active::before, .tab.active::after { background: #f4f4f4; border-bottom-color: #f4f4f4; clip-path: none; }
.tab.active span { width: 16px; margin-left: 14px; }
.tab.active em svg { width: 14px; height: 14px; margin-left: 8px; }
.newtab {
  width: 53px;
  height: 31px;
  margin: 0 0 8px 2px;
  border: 1.500px solid #a5a5a5;
  border-radius: 5px;
  background: #d9d9d9;
  transform: skewX(20deg);
}
.profile {
  width: 92px;
  height: 53px;
  margin: 0 8px 8px auto;
  border: 1.500px solid #999;
  border-radius: 7px;
  background: #d5d6d8;
  font-size: 22px;
  line-height: 54px;
  text-align: center;
}
.toolbar {
  height: 75px;
  flex: none;
  display: flex;
  align-items: center;
  background: #f4f4f4;
  border-bottom: 2px solid #c1c1c1;
  padding-left: 23px;
}
.arrow { width: 26px; height: 26px; }
.fwd { margin-left: 31px; }
.reload { width: 28px; height: 28px; margin-left: 28px; }
.urlbox {
  width: 2454px;
  height: 54px;
  margin: 0 22px 0 23px;
  display: flex;
  align-items: center;
  background: #fff;
  border: 1.500px solid #b1b1b1;
  border-radius: 7px;
  padding-left: 18px;
  font-size: 27px;
  color: #000;
}
.lock { width: 16px; height: 22px; }
.org { color: #188044; margin-left: 16px; padding-top: 3px; width: 315px; white-space: nowrap; letter-spacing: 0.100px; }
.bar { width: 2px; height: 40px; background: #dcdcdc; margin-right: 13px; }
.url { padding-top: 3px; letter-spacing: 0.080px; }
.sec { color: #0d904f; }
.dim { color: #808080; }
.path { letter-spacing: 0.450px; }
.star { width: 29px; height: 29px; margin: 0 9px 0 auto; }
.ext { width: 32px; height: 32px; margin-right: 24px; }
.ext.abp { width: 31px; }
.pinkext { margin-right: 25px; }
.dots { width: 8px; height: 28px; margin-left: 11px; fill: #666; }
.b-text { font: bold 32px "Liberation Serif", serif; fill: #1a1412; transform: scaleX(0.8); }
.b-ext { font: bold 26px "Liberation Serif", serif; fill: #1a1412; transform: scaleX(0.85); }

/* company page */
.page {
  flex: 1;
  overflow: hidden;
  background: #fff;
  padding: 40px 480px 0;
  font-family: Lato, "Liberation Sans", sans-serif;
  font-size: 36px;
  line-height: 50px;
  letter-spacing: 1px;
  color: #0b0c0c;
}
.head { display: flex; justify-content: space-between; align-items: flex-start; height: 200px; }
h1 { font-size: 90px; line-height: 100px; font-weight: 700; white-space: nowrap; -webkit-text-stroke: 1.800px #0b0c0c; }
.t1 { letter-spacing: 2.900px; }
.t2 { letter-spacing: 2.600px; }
.file-btn {
  width: 404px;
  height: 80px;
  margin-top: 94px;
  background: #00823b;
  border-bottom: 4px solid #003618;
  color: #fff;
  text-align: center;
  line-height: 82px;
  letter-spacing: 0.800px;
}
.number { margin-top: 64px; letter-spacing: 1.200px; }
.page b, dd, h2, .ctabs { font-weight: 700; -webkit-text-stroke: 0.600px currentColor; }
.digits { letter-spacing: 2.400px; }
.ctabs {
  display: flex;
  align-items: flex-start;
  margin-top: 100px;
  height: 114px;
  color: #005ea5;
  background: linear-gradient(#bfc1c3, #bfc1c3) 232px 100% / 1688px 2px no-repeat;
}
.ctabs a { height: 92px; margin-top: 10px; background: #dee0e2; line-height: 84px; padding: 5px 0 0 21px; white-space: nowrap; }
.ctabs .current { height: 114px; width: 232px; margin-top: 0; background: #fff; border: 2px solid #bfc1c3; border-bottom: 0; padding: 13px 0 0 28px; }
.ctabs .filing { width: 272px; margin-left: 10px; }
.ctabs .people { width: 170px; margin-left: 10px; letter-spacing: 1.300px; }
.facts { display: flex; flex-direction: column; gap: 40px; margin-top: 56px; }
.pair { display: grid; grid-template-columns: 1320px 1fr; }
.reg { letter-spacing: 1.150px; }
.addr { letter-spacing: 0.900px; }
.ptype { letter-spacing: 1.300px; }
.date { letter-spacing: 1.350px; }
.first { letter-spacing: 0.650px; }
.cols { display: grid; grid-template-columns: 990px 1fr; margin-top: 129px; }
h2 { font-size: 46px; line-height: 60px; margin-bottom: 41px; letter-spacing: 1.300px; }

/* download shelf */
.downloads {
  height: 88px;
  flex: none;
  display: flex;
  align-items: flex-start;
  padding: 8px 0 0 8px;
  border-top: 2px solid #c3c3c3;
  background: linear-gradient(#f5f5f5, #f0f0f0 50%, #e6e6e6);
  color: #000;
  font-size: 22px;
}
.dl-item, .dl-all {
  height: 64px;
  display: flex;
  align-items: center;
  border: 2px solid #c4c4c4;
  border-radius: 8px;
  background: linear-gradient(#fbfbfb, #efefef);
}
.dl-item { width: 412px; }
.dl-icon { width: 24px; height: 31px; margin-left: 22px; }
.dl-name { margin-left: 26px; letter-spacing: 0.350px; }
.dl-caret { margin-left: auto; width: 28px; height: 56px; border-left: 2px solid #d4d4d4; padding: 22px 0 0 8px; }
.dl-caret svg { width: 10px; height: 7px; }
.dl-all { width: 177px; margin-left: auto; }
.dl-all svg { width: 28px; height: 26px; margin: 0 10px 0 23px; }
.dl-all span { letter-spacing: -0.200px; white-space: nowrap; }
.dl-x { width: 15px; height: 15px; margin: 24px 24px 0 19px; }
.xcf-small { font: 8px "Noto Sans", sans-serif; fill: #444; }

/* desktop and dock */
.stars { position: absolute; left: 0; top: 1652px; width: 2880px; height: 148px; }
.dock {
  position: relative;
  width: 2700px;
  height: 134px;
  margin: 14px 0 0 90px;
  padding: 0 7px 0 9px;
  display: flex;
  flex: none;
  border-radius: 10px 10px 0 0;
  background: linear-gradient(to right, #54779a 0, #557899 1000px, #50708c 1300px, #4e6680 1700px, #515b6c 2000px, #53565f 2300px, #54545d 2700px);
}
.slot { width: 109.700px; height: 134px; position: relative; flex: none; }
.slot svg { width: 110px; height: 134px; filter: drop-shadow(0 2px 2px rgba(0, 0, 0, 0.3)); }
.run::after { content: ""; position: absolute; left: 50px; top: 122px; width: 8px; height: 8px; border-radius: 50%; background: #03050f; }
.sep { width: 51px; height: 98px; margin-top: 18px; flex: none; background: linear-gradient(#2d3d50, #2d3d50) 24px 0 / 2px 100% no-repeat; }
.cal-m { font: 17px Inter, sans-serif; fill: #fff; }
.cal-d { font: 300 46px Inter, sans-serif; fill: #222; letter-spacing: -2px; }
.calc-n { font: 300 13px Inter, sans-serif; fill: #c9d0d2; }
.calc-k { font: 8px Inter, sans-serif; fill: #444; }
.calc-o { font: 10px Inter, sans-serif; fill: #ffe2c2; }
.note { font: italic 12px Lato, sans-serif; }
.ink { fill: #4a4524; }
.red { fill: #e2231a; }
.blue { fill: #20306e; }
.badge { font: 20px Inter, sans-serif; fill: #fff; }
.tbl { font: 13px "Liberation Sans", sans-serif; fill: #222; }
.tbl .th { fill: #fff; }
.xcf { font: 14px "Noto Sans", sans-serif; fill: #444; }
```
